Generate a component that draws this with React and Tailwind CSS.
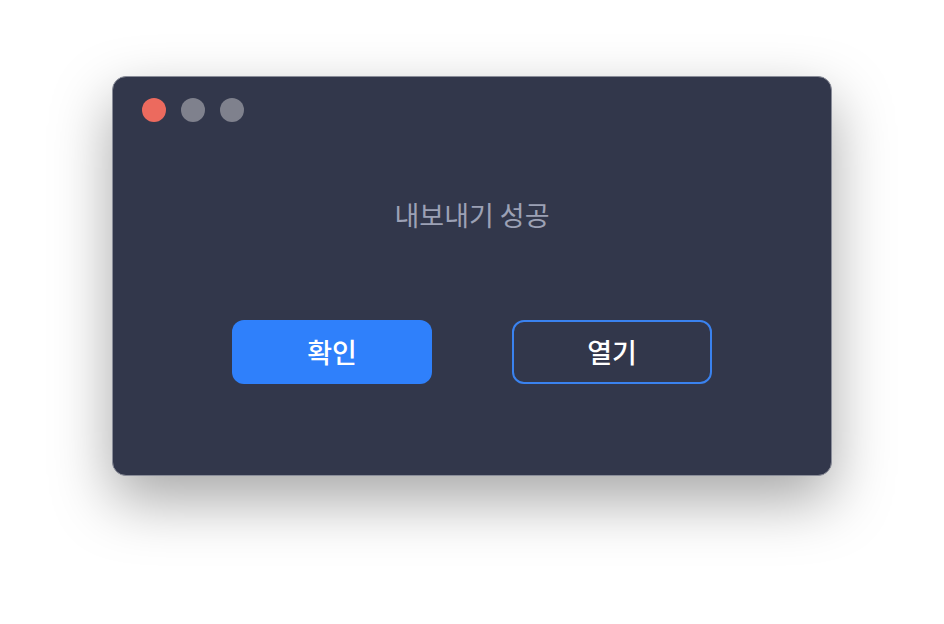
import React from "react";

const App = () => {
  return (
    <div
      className="w-[944px] h-[624px] bg-white flex justify-center pt-[76px]"
      style={{ fontFamily: '"Noto Sans CJK KR", "Noto Sans", sans-serif' }}
    >
      <div className="w-[720px] h-[400px] bg-[#32374b] rounded-[14px] border border-[#8a8d99] shadow-[0_24px_60px_rgba(0,0,0,0.35)] flex flex-col">
        {/* Window controls */}
        <div className="flex items-center gap-[15px] pl-[29px] pt-[21px]">
          <span className="w-[24px] h-[24px] rounded-full bg-[#ec6a5e]" />
          <span className="w-[24px] h-[24px] rounded-full bg-[#7f818d]" />
          <span className="w-[24px] h-[24px] rounded-full bg-[#7f818d]" />
        </div>

        {/* Message */}
        <p className="mt-[76px] text-center text-[27px] leading-[34px] text-[#9ca1b5]">
          내보내기 성공
        </p>

        {/* Actions */}
        <div className="mt-[88px] flex justify-center gap-[80px]">
          <button className="w-[200px] h-[64px] rounded-[12px] bg-[#2f80fb] text-white text-[27px] font-medium">
            확인
          </button>
          <button className="w-[200px] h-[64px] rounded-[12px] border-2 border-[#3a82ef] text-white text-[27px] font-medium">
            열기
          </button>
        </div>
      </div>
    </div>
  );
};

export default App;
